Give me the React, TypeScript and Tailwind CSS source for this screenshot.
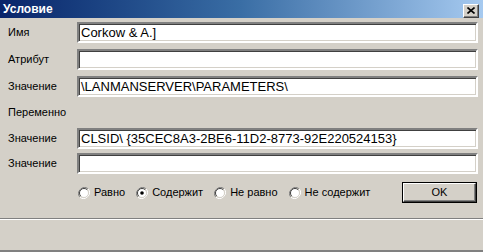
import React from 'react';

const sunken =
  'border-2 border-t-[#808080] border-l-[#808080] border-b-white border-r-white shadow-[inset_1px_1px_0_#404040,inset_-1px_-1px_0_#d4d0c8] bg-white';

function Field({ value }: { value?: string }) {
  return (
    <div className={`h-[21px] flex-1 flex items-center pl-[2px] ${sunken}`}>
      <span className="text-[13px] leading-none text-black whitespace-nowrap">{value}</span>
    </div>
  );
}

function Row({ label, value }: { label: string; value?: string }) {
  return (
    <div className="flex items-center">
      <div className="w-[77px] pl-[8px] text-[11px] text-black">{label}</div>
      <Field value={value} />
    </div>
  );
}

function Radio({ checked, label }: { checked?: boolean; label: string }) {
  return (
    <div className="flex items-center gap-[4px]">
      <svg width="12" height="12" viewBox="0 0 12 12">
        <path d="M 10.2 1.8 A 6 6 0 0 0 1.8 10.2" fill="none" stroke="#808080" strokeWidth="1" />
        <path d="M 1.8 10.2 A 6 6 0 0 0 10.2 1.8" fill="none" stroke="#ffffff" strokeWidth="1" />
        <circle cx="6" cy="6" r="4.5" fill="#ffffff" />
        <path d="M 9.2 2.8 A 4.5 4.5 0 0 0 2.8 9.2" fill="none" stroke="#404040" strokeWidth="1" />
        <path d="M 2.8 9.2 A 4.5 4.5 0 0 0 9.2 2.8" fill="none" stroke="#d4d0c8" strokeWidth="1" />
        {checked && <circle cx="6" cy="6" r="1.8" fill="#000000" />}
      </svg>
      <span className="text-[11px] text-black">{label}</span>
    </div>
  );
}

export default function App() {
  return (
    <div
      className="w-[483px] h-[252px] bg-[#d4d0c8] flex flex-col overflow-hidden"
      style={{ fontFamily: '"Liberation Sans", Arial, sans-serif' }}
    >
      {/* title bar */}
      <div className="h-[18px] flex items-center justify-between pl-[3px] pr-[4px] bg-gradient-to-r from-[#0a246a] via-[#3a6ea5] to-[#a6caf0]">
        <span className="text-white font-bold text-[12px]">Условие</span>
        <div className="w-[16px] h-[14px] mt-[3px] flex items-center justify-center bg-[#d4d0c8] border border-t-white border-l-white border-b-[#404040] border-r-[#404040] shadow-[inset_-1px_-1px_0_#808080]">
          <svg width="8" height="7" viewBox="0 0 8 7">
            <path d="M0.5 0.5 L7.5 6.5 M7.5 0.5 L0.5 6.5" stroke="#000" strokeWidth="1.6" />
          </svg>
        </div>
      </div>

      <div className="flex flex-col pt-[4px] pr-[5px]">
        <div className="flex flex-col gap-[6px]">
          <Row label="Имя" value="Corkow & A.]" />
          <Row label="Атрибут" />
          <Row label="Значение" value="\LANMANSERVER\PARAMETERS\" />
        </div>
        <div className="h-[31px] flex items-center pl-[8px] text-[11px] text-black">Переменно</div>
        <div className="flex flex-col gap-[4px]">
          <Row label="Значение" value="CLSID\ {35CEC8A3-2BE6-11D2-8773-92E220524153}" />
          <Row label="Значение" />
        </div>
        <div className="flex items-center mt-[8px] pl-[78px] h-[21px]">
          <div className="flex items-center gap-[11px] flex-1">
            <Radio label="Равно" />
            <Radio checked label="Содержит" />
            <Radio label="Не равно" />
            <Radio label="Не содержит" />
          </div>
          <div className="w-[75px] h-[21px] mr-[1px] border border-black">
            <div className="w-full h-full flex items-center justify-center border border-t-white border-l-white border-b-[#404040] border-r-[#404040] shadow-[inset_-1px_-1px_0_#808080] text-[11px] text-black">
              OK
            </div>
          </div>
        </div>
      </div>

      {/* separator */}
      <div className="mt-[15px] h-[1px] bg-[#808080]" />
      <div className="h-[1px] bg-white" />
      <div className="flex-1" />
      <div className="h-[2px] bg-[#808080]" />
    </div>
  );
}
